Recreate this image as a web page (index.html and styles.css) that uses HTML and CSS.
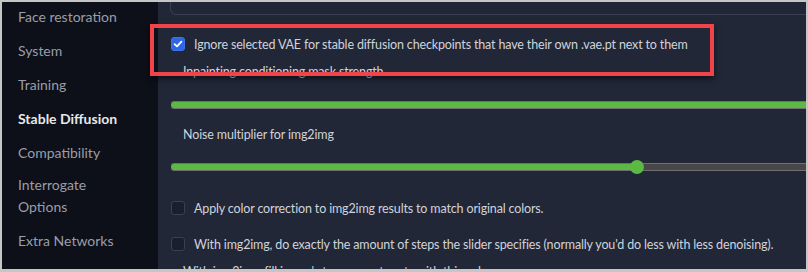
FILE: index.html
```html
<!DOCTYPE html>
<html lang="en">
<head>
<meta charset="utf-8">
<title>Settings</title>
<link rel="stylesheet" href="styles.css">
</head>
<body>
<div class="frame">
  <nav class="sidebar">
    <div class="nav-item">Face restoration</div>
    <div class="nav-item">System</div>
    <div class="nav-item">Training</div>
    <div class="nav-item active">Stable Diffusion</div>
    <div class="nav-item">Compatibility</div>
    <div class="nav-item two-line">Interrogate<br>Options</div>
    <div class="nav-item">Extra Networks</div>
    <div class="nav-item">User interface</div>
  </nav>
  <main class="main">
    <div class="content">
      <div class="dropdown"><span class="dropdown-value">Automatic</span></div>
      <div class="row check-row r1">
        <span class="checkbox checked"><svg viewBox="0 0 14 14" width="14" height="14"><path d="M3.6 7.2 L6 9.4 L10.4 4.6" fill="none" stroke="#fff" stroke-width="1.8" stroke-linecap="round" stroke-linejoin="round"/></svg></span>
        <span class="label">Ignore selected VAE for stable diffusion checkpoints that have their own .vae.pt next to them</span>
      </div>
      <div class="row text-row r2"><span class="label">Inpainting conditioning mask strength</span></div>
      <div class="row slider-row r3">
        <div class="track"><div class="fill full"></div></div>
      </div>
      <div class="row text-row r4"><span class="label">Noise multiplier for img2img</span></div>
      <div class="row slider-row r5">
        <div class="track"><div class="fill partial"></div><span class="thumb"></span></div>
      </div>
      <div class="row check-row r6">
        <span class="checkbox"></span>
        <span class="label">Apply color correction to img2img results to match original colors.</span>
      </div>
      <div class="row check-row r7">
        <span class="checkbox"></span>
        <span class="label">With img2img, do exactly the amount of steps the slider specifies (normally you'd do less with less denoising).</span>
      </div>
      <div class="row text-row r8"><span class="label">With img2img, fill image's transparent parts with this color.</span></div>
    </div>
  </main>
  <div class="highlight"></div>
</div>
</body>
</html>
```

FILE: styles.css
```css
html, body {
  margin: 0;
  padding: 0;
  background: #c6c6c6;
  width: 808px;
  height: 272px;
  overflow: hidden;
}
.frame {
  position: relative;
  margin: 2px 2px 0 2px;
  width: 804px;
  height: 267px;
  display: flex;
  overflow: hidden;
  font-family: Lato, "Noto Sans", sans-serif;
}
.sidebar {
  width: 156px;
  flex: none;
  background: #0d0f19;
  margin-top: -2px;
}
.nav-item {
  height: 34px;
  line-height: 34px;
  padding-left: 16px;
  font-size: 14px;
  color: #9a9ea8;
  white-space: nowrap;
}
.nav-item.active {
  color: #e6e8ec;
  font-weight: 700;
}
.nav-item.two-line {
  height: auto;
  line-height: 22px;
  padding-top: 4px;
  padding-bottom: 6px;
}
.main {
  flex: 1;
  background: #212737;
  overflow: hidden;
}
.content {
  width: 760px;
  padding-left: 12px;
}
.dropdown {
  margin-top: -23px;
  height: 36px;
  border: 1px solid #3a4050;
  border-radius: 6px;
  width: 740px;
  display: flex;
  align-items: flex-end;
  box-sizing: border-box;
}
.dropdown-value {
  font-size: 12.5px;
  line-height: 16px;
  letter-spacing: -0.15px;
  color: #c9ccd3;
  padding: 0 0 9px 12px;
}
.row {
  display: flex;
  align-items: center;
}
.r1 { height: 28px; margin-top: 15px; }
.r2 { height: 26px; }
.r3 { height: 41px; }
.r4 { height: 18px; }
.r5 { height: 48px; }
.r6 { height: 34px; }
.r7 { height: 38px; }
.r8 { height: 16px; }
.label {
  font-size: 12.5px;
  letter-spacing: -0.15px;
  color: #d0d3da;
  white-space: nowrap;
}
.text-row .label { padding-left: 13px; }
.check-row .label { padding-left: 9px; }
.checkbox {
  width: 14px;
  height: 14px;
  margin-left: 1px;
  border-radius: 3px;
  box-sizing: border-box;
  background: #1a1f2d;
  border: 1px solid #394051;
  flex: none;
  display: flex;
}
.checkbox.checked {
  background: #2f66e3;
  border-color: #3d72ea;
}
.checkbox svg { display: block; margin: -1px; }
.slider-row { padding-left: 1px; }
.track {
  position: relative;
  width: 700px;
  height: 6px;
  background: #474747;
  border-top: 1px solid #6d6f74;
  border-bottom: 1px solid #6d6f74;
  border-radius: 3px 0 0 3px;
}
.fill {
  height: 6px;
  background: #5cb943;
  border-radius: 3px 0 0 3px;
}
.fill.full { width: 100%; }
.fill.partial { width: 466px; }
.thumb {
  position: absolute;
  left: 459px;
  top: -4px;
  width: 14px;
  height: 14px;
  border-radius: 50%;
  background: #5cb943;
}
.highlight {
  position: absolute;
  left: 148px;
  top: 22px;
  width: 564px;
  height: 52px;
  box-sizing: border-box;
  border: 4px solid #f0444a;
  box-shadow: 0 3px 6px rgba(0, 0, 0, 0.55);
}
```
